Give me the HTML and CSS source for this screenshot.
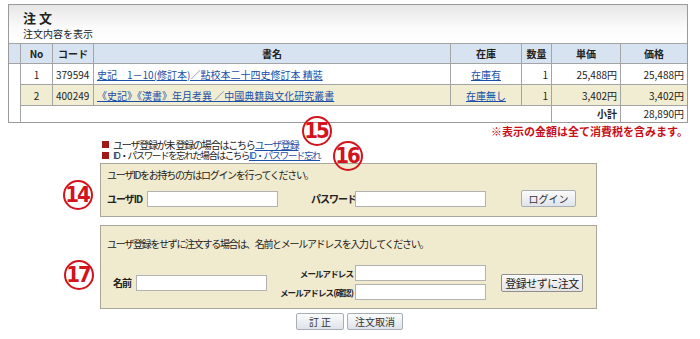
FILE: index.html
```html
<!DOCTYPE html>
<html lang="ja">
<head>
    <meta charset="UTF-8">
    <title>注文</title>
    <link rel="stylesheet" href="styles.css">
</head>
<body>
    <div class="page">
        <div class="order-box">
            <div class="order-head">
                <h1>注 文</h1>
                <p>注文内容を表示</p>
            </div>
            <table class="order-table">
                <tr class="head-row">
                    <th class="pad"></th>
                    <th class="c-no">No</th>
                    <th class="c-code">コード</th>
                    <th class="c-title">書名</th>
                    <th class="c-stock">在庫</th>
                    <th class="c-qty">数量</th>
                    <th class="c-unit">単価</th>
                    <th class="c-price">価格</th>
                </tr>
                <tr>
                    <td class="pad"></td>
                    <td class="center">1</td>
                    <td>379594</td>
                    <td><a href="#">史記　1－10(修訂本)／點校本二十四史修訂本 精裝</a></td>
                    <td class="center"><a href="#">在庫有</a></td>
                    <td class="right">1</td>
                    <td class="right">25,488円</td>
                    <td class="right">25,488円</td>
                </tr>
                <tr class="alt">
                    <td class="pad"></td>
                    <td class="center">2</td>
                    <td>400249</td>
                    <td><a href="#">《史記》《漢書》年月考異 ／中國典籍與文化研究叢書</a></td>
                    <td class="center"><a href="#">在庫無し</a></td>
                    <td class="right">1</td>
                    <td class="right">3,402円</td>
                    <td class="right">3,402円</td>
                </tr>
                <tr class="sum-row">
                    <td class="pad"></td>
                    <td colspan="5" class="blank"></td>
                    <td class="right bold">小計</td>
                    <td class="right">28,890円</td>
                </tr>
            </table>
        </div>

        <p class="tax-note">※表示の金額は全て消費税を含みます。</p>

        <div class="forms">
            <ul class="links">
                <li>ユーザ登録が未 登録の場合はこちら<a href="#">ユーザ登録</a></li>
                <li class="tight">ID・パスワードを忘れた場合はこちら<a href="#">ID・パスワード忘れ</a></li>
            </ul>

            <div class="panel login-panel">
                <p>ユーザIDをお持ちの方はログインを行ってください。</p>
                <div class="login-row">
                    <label class="lbl lbl-id">ユーザID</label>
                    <input type="text" class="field">
                    <label class="lbl lbl-pass">パスワード</label>
                    <input type="password" class="field">
                    <button class="btn btn-login">ログイン</button>
                </div>
            </div>

            <div class="panel guest-panel">
                <p>ユーザ登録をせずに注文する場合は、名前とメールアドレスを入力してください。</p>
                <div class="guest-row">
                    <label class="lbl lbl-name">名前</label>
                    <input type="text" class="field">
                    <div class="mail-grid">
                        <label class="lbl small">メールアドレス</label>
                        <input type="text" class="field">
                        <label class="lbl small">メールアドレス(確認)</label>
                        <input type="text" class="field">
                    </div>
                    <button class="btn-plain">登録せずに注文</button>
                </div>
            </div>

            <div class="actions">
                <button class="btn btn-fix">訂 正</button>
                <button class="btn btn-cancel">注文取消</button>
            </div>
        </div>

        <span class="mark m14">14</span>
        <span class="mark m15">15</span>
        <span class="mark m16">16</span>
        <span class="mark m17">17</span>
    </div>
</body>
</html>
```

FILE: styles.css
```css
body { margin: 0; background: #fff; font-family: "Noto Sans CJK JP", "DejaVu Sans", sans-serif; font-size: 10px; color: #222; }
a { color: #1a4fa8; }

.page { position: relative; width: 700px; height: 339px; padding: 4px 0 0 8px; box-sizing: border-box; overflow: hidden; }

.order-box { width: 680px; border: 1px solid #9a9a9a; box-sizing: border-box; }
.order-head { background: linear-gradient(#e6e6e6, #fbfbfb 60%, #fff); padding: 5px 0 0 14px; height: 38px; box-sizing: border-box; }
.order-head h1 { margin: 0; font-size: 13px; line-height: 15px; font-weight: bold; color: #222; }
.order-head p { margin: 2px 0 0; font-size: 10px; line-height: 14px; }

.order-table { width: 100%; border-collapse: collapse; }
.order-table th, .order-table td { border: 1px solid #a4a4a4; padding: 0 3px; white-space: nowrap; line-height: 19px; font-size: 10px; }
.order-table th { background: #d7e3f0; font-weight: bold; color: #222; height: 19px; }
.order-table td { height: 20px; }
.order-table .pad { width: 11px; border-left: none; border-right: 1px solid #a4a4a4; padding: 0; }
.order-table tr:not(.head-row) .pad { border-top: none; border-bottom: none; }
.order-table .alt td:not(.pad) { background: #f1edd2; }
.c-no { width: 25px; }
.c-code { width: 34px; }
.c-stock { width: 64px; }
.c-qty { width: 23px; }
.c-unit { width: 62px; }
.c-price { width: 60px; }
.order-table tr > :last-child { border-right: none; }
.center { text-align: center; }
.right { text-align: right; }
.bold { font-weight: bold; }
.sum-row td { height: 16px; line-height: 16px; border-bottom: none; }
.sum-row .blank { border-left: none; }

.tax-note { margin: 0; width: 680px; text-align: right; color: #c8101a; font-weight: bold; font-size: 11px; line-height: 16px; }

.forms { margin-left: 92px; width: 497px; }
.links { list-style: none; margin: 0; padding: 0 0 0 2px; }
.links li { position: relative; padding-left: 11px; font-size: 10px; line-height: 11px; letter-spacing: -1.2px; white-space: nowrap; }
.links li.tight { font-size: 9.6px; letter-spacing: -1.5px; }
.links li::before { content: ""; position: absolute; left: 0; top: 2px; width: 7px; height: 7px; background: #a01818; }

.panel { background: #f0ebcf; border: 1px solid #a9a79a; box-sizing: border-box; padding: 0 6px; }
.panel p { margin: 0; font-size: 10px; letter-spacing: -1.3px; white-space: nowrap; }
.login-panel { height: 54px; margin-top: 2px; padding-top: 3px; }
.login-row { display: flex; align-items: center; margin-top: 8px; }
.lbl { font-weight: bold; font-size: 10px; letter-spacing: -1px; white-space: nowrap; flex-shrink: 0; }
.lbl-id { width: 37px; margin-right: 3px; }
.lbl-pass { width: 41px; margin-left: 33px; margin-right: 3px; }
.lbl-name { width: 20px; margin-right: 3px; }
.field { width: 131px; height: 16px; border: 1px solid #b3b3b3; background: #fff; padding: 0; box-sizing: border-box; flex-shrink: 0; }
.btn { font-family: inherit; font-size: 10px; color: #333; background: linear-gradient(#fbfbfb, #dfe4ea); border: 1px solid #a8aeb5; border-radius: 2px; height: 17px; padding: 0; line-height: 14px; white-space: nowrap; }
.btn-login { margin-left: 35px; width: 55px; }

.guest-panel { height: 84px; margin-top: 8px; padding-top: 10px; }
.guest-row { display: flex; align-items: center; margin-top: 14px; padding: 0 7px 0 6px; }
.mail-grid { display: grid; grid-template-columns: auto 131px; row-gap: 3px; column-gap: 2px; align-items: center; margin-left: auto; }
.mail-grid .lbl { text-align: right; }
.small { font-size: 8.5px; letter-spacing: -0.9px; }
.btn-plain { margin-left: 15px; font-family: inherit; font-size: 11px; color: #222; background: linear-gradient(#fafafa, #e4e4e4); border: 1px solid #8f8f8f; border-radius: 2px; height: 18px; width: 82px; padding: 0; line-height: 14px; white-space: nowrap; letter-spacing: -0.5px; flex-shrink: 0; }

.actions { display: flex; justify-content: center; gap: 3px; margin-top: 4px; padding-left: 2px; }
.btn-fix { width: 48px; }
.btn-cancel { width: 56px; }

.mark { position: absolute; width: 26px; height: 26px; border: 2px solid #d2141c; border-radius: 50%; color: #d2141c; font-family: "Liberation Sans Narrow", "DejaVu Sans Condensed", "DejaVu Sans", sans-serif; font-stretch: condensed; font-weight: bold; font-size: 22px; line-height: 26px; text-align: center; letter-spacing: -2px; text-indent: -2px; background: #fff; }
.m14 { left: 63px; top: 180px; }
.m15 { left: 302px; top: 116px; background: transparent; }
.m16 { left: 333px; top: 141px; background: transparent; }
.m17 { left: 64px; top: 260px; }
```
